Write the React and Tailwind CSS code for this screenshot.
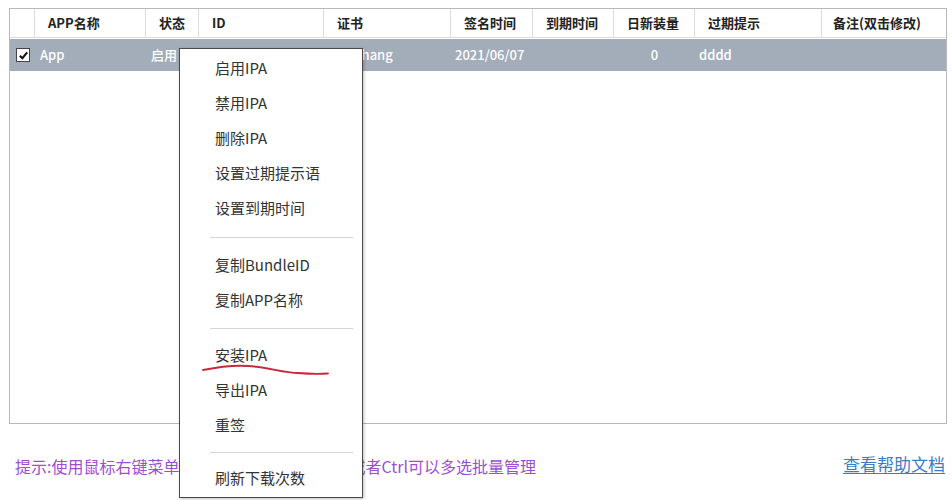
const cols = [
  { label: "", w: "w-[25px]" },
  { label: "APP名称", w: "w-[111px]" },
  { label: "状态", w: "w-[53px]" },
  { label: "ID", w: "w-[125px]" },
  { label: "证书", w: "w-[127px]" },
  { label: "签名时间", w: "w-[82px]" },
  { label: "到期时间", w: "w-[81px]" },
  { label: "日新装量", w: "w-[81px]" },
  { label: "过期提示", w: "w-[127px]" },
  { label: "备注(双击修改)", w: "w-[124px]" },
];

const menu = [
  "启用IPA",
  "禁用IPA",
  "删除IPA",
  "设置过期提示语",
  "设置到期时间",
  "sep:h-[22px]",
  "复制BundleID",
  "复制APP名称",
  "sep:h-[20px]",
  "安装IPA",
  "导出IPA",
  "重签",
  "sep:h-[18px]",
  "刷新下载次数",
];

function ContextMenu() {
  return (
    <div className="absolute left-[179px] top-[48px] w-[184px] h-[450px] bg-white border border-[#4a4a4a] shadow-[1px_1px_3px_rgba(0,0,0,0.25)] pt-[2px]">
      {menu.map((item, i) =>
        item.startsWith("sep:") ? (
          <div
            key={i}
            className={`flex items-center pl-[30px] pr-[9px] ${
              item === "sep:h-[22px]" ? "h-[22px]" : item === "sep:h-[20px]" ? "h-[20px]" : "h-[18px]"
            }`}
          >
            <div className="h-px w-full bg-[#d4d4d4]" />
          </div>
        ) : (
          <div key={i} className="h-[35px] flex items-center pl-[35px] text-[15px] text-[#333]">
            {item}
          </div>
        )
      )}
    </div>
  );
}

export default function App() {
  return (
    <div
      className="relative w-[952px] h-[500px] bg-white overflow-hidden"
      style={{ fontFamily: '"Noto Sans CJK SC", "Noto Sans", sans-serif' }}
    >
      {/* 表格 */}
      <div className="absolute left-[9px] top-[8px] w-[938px] h-[416px] border border-[#b8b8b8] bg-white">
        <div className="flex h-[29px] border-b border-[#dcdcdc]">
          {cols.map((c, i) => (
            <div
              key={i}
              className={`${c.w} flex-none flex items-center ${i === 9 ? "pl-[11px]" : "pl-[13px]"} text-[13px] font-bold text-[#222] ${
                i < 9 ? "border-r border-[#dcdcdc]" : ""
              }`}
            >
              {c.label}
            </div>
          ))}
        </div>
        <div className="flex h-[32px] mt-px bg-[#a3adb9] text-[13px] font-medium text-white">
          <div className="w-[25px] flex-none flex items-center pl-[6px]">
            <div className="w-[14px] h-[14px] bg-white border border-[#444] flex items-center justify-center">
              <svg viewBox="0 0 12 12" className="w-[11px] h-[11px]">
                <path d="M2 6.2 L4.8 9 L10 2.6" fill="none" stroke="#111" strokeWidth="2.2" />
              </svg>
            </div>
          </div>
          <div className="w-[111px] flex-none flex items-center pl-[5px]">App</div>
          <div className="w-[53px] flex-none flex items-center pl-[5px]">启用</div>
          <div className="w-[125px] flex-none flex items-center pl-[5px]"></div>
          <div className="w-[127px] flex-none flex items-center pl-[5px]">wenzhang</div>
          <div className="w-[82px] flex-none flex items-center pl-[4px]">2021/06/07</div>
          <div className="w-[81px] flex-none flex items-center pl-[4px]"></div>
          <div className="w-[81px] flex-none flex items-center justify-center">0</div>
          <div className="w-[127px] flex-none flex items-center pl-[4px]">dddd</div>
          <div className="w-[124px] flex-none" />
        </div>
      </div>

      {/* 底部提示 */}
      <div className="absolute left-0 right-0 top-[450px] flex items-center justify-between pl-[15px] pr-[7px]">
        <div className="text-[16px] text-[#9a4fd0] mt-[4px]">
          提示:使用鼠标右键菜单进行操作，按住 Shift 键或者Ctrl可以多选批量管理
        </div>
        <a className="text-[17px] text-[#3c7cc4] underline underline-offset-2">查看帮助文档</a>
      </div>

      <ContextMenu />

      {/* 红色划线 */}
      <svg className="absolute left-[198px] top-[360px] w-[136px] h-[20px]" viewBox="0 0 136 20">
        <path
          d="M5 10 C 20 7, 35 5, 50 6 C 70 7, 85 13, 100 13 C 112 14, 122 14, 130 13.5"
          fill="none"
          stroke="#c8283c"
          strokeWidth="1.8"
          strokeLinecap="round"
        />
      </svg>
    </div>
  );
}
